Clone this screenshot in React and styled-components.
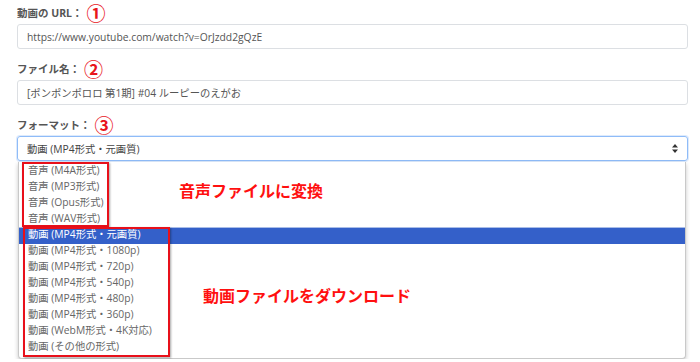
import React from "react";
import styled, { createGlobalStyle } from "styled-components";

const GlobalStyle = createGlobalStyle`
  html, body {
    margin: 0;
    padding: 0;
    background: #fff;
  }
  body {
    font-family: "Open Sans", "Noto Sans CJK JP", sans-serif;
    color: #555;
  }
`;

const audioOptions = ["音声 (M4A形式)", "音声 (MP3形式)", "音声 (Opus形式)", "音声 (WAV形式)"];

const videoOptions = [
  "動画 (MP4形式・元画質)",
  "動画 (MP4形式・1080p)",
  "動画 (MP4形式・720p)",
  "動画 (MP4形式・540p)",
  "動画 (MP4形式・480p)",
  "動画 (MP4形式・360p)",
  "動画 (WebM形式・4K対応)",
  "動画 (その他の形式)",
];

function App() {
  return (
    <>
      <GlobalStyle />
      <Form>
        <Field>
          <Label>
            動画の URL：<Step>①</Step>
          </Label>
          <Input>https://www.youtube.com/watch?v=OrJzdd2gQzE</Input>
        </Field>
        <Field>
          <Label>
            ファイル名：<Step>②</Step>
          </Label>
          <Input>[ポンポンポロロ 第1期] #04 ルーピーのえがお</Input>
        </Field>
        <Field>
          <Label>
            フォーマット：<Step>③</Step>
          </Label>
          <Select>
            <span>動画 (MP4形式・元画質)</span>
            <svg width="6" height="9" viewBox="0 0 6 9">
              <path d="M3 0 L6 3.4 H0 Z M3 9 L6 5.6 H0 Z" fill="#333" />
            </svg>
          </Select>
          <Dropdown>
            {audioOptions.map((o) => (
              <Option key={o}>{o}</Option>
            ))}
            {videoOptions.map((o, i) => (
              <Option key={o} $active={i === 0}>
                {o}
              </Option>
            ))}
            <RedBox $left={3} $top={0} $width={87} $height={65} />
            <RedBox $left={4} $top={65} $width={147} $height={130} />
            <Note $left={160} $top={18}>音声ファイルに変換</Note>
            <Note $left={184} $top={123}>動画ファイルをダウンロード</Note>
          </Dropdown>
        </Field>
      </Form>
    </>
  );
}

export default App;

const Form = styled.div`
  display: flex;
  flex-direction: column;
  gap: 7px;
  padding: 0 12px 0 17px;
`;

const Field = styled.div`
  display: flex;
  flex-direction: column;
`;

const Label = styled.div`
  height: 24px;
  display: flex;
  align-items: center;
  font-size: 10.5px;
  font-weight: 700;
  color: #555;
`;

const Step = styled.span`
  font-family: "Noto Sans CJK JP", sans-serif;
  color: #e8141c;
  font-size: 19px;
  font-weight: 700;
  margin-left: 4px;
  line-height: 1;
`;

const Input = styled.div`
  box-sizing: border-box;
  height: 25px;
  display: flex;
  align-items: center;
  padding: 0 9px;
  border: 1px solid #dcdfe3;
  border-radius: 3px;
  font-size: 10.3px;
  color: #555;
  white-space: nowrap;
`;

const Select = styled(Input)`
  justify-content: space-between;
  border-color: #8fbcf8;
  box-shadow: 0 0 0 1px rgba(120, 170, 245, 0.25);
  color: #444;
`;

const Dropdown = styled.div`
  position: relative;
  margin: 1px 2px 0 1px;
  box-sizing: border-box;
  padding: 2px 0;
  background: #fff;
  border: 1px solid #c9c9c9;
  border-top: none;
  border-radius: 0 0 4px 4px;
  box-shadow: 0 2px 4px rgba(0, 0, 0, 0.22);
`;

const Option = styled.div`
  height: 16px;
  line-height: 13px;
  padding-left: 9px;
  font-size: 10.3px;
  white-space: nowrap;
  color: ${(p) => (p.$active ? "#fff" : "#666")};
  background: ${(p) => (p.$active ? "#3460c9" : "transparent")};
  box-shadow: ${(p) => (p.$active ? "0 -1px 0 #a9bde8" : "none")};
`;

const RedBox = styled.div`
  position: absolute;
  left: ${(p) => p.$left}px;
  top: ${(p) => p.$top}px;
  width: ${(p) => p.$width}px;
  height: ${(p) => p.$height}px;
  box-sizing: border-box;
  border: 2px solid #e8101a;
  box-shadow: 1px 1px 2px rgba(0, 0, 0, 0.35);
  pointer-events: none;
`;

const Note = styled.div`
  position: absolute;
  left: ${(p) => p.$left}px;
  top: ${(p) => p.$top}px;
  font-family: "Noto Sans CJK JP", sans-serif;
  font-size: 16px;
  font-weight: 700;
  color: #ff1010;
  white-space: nowrap;
  line-height: 20px;
`;
